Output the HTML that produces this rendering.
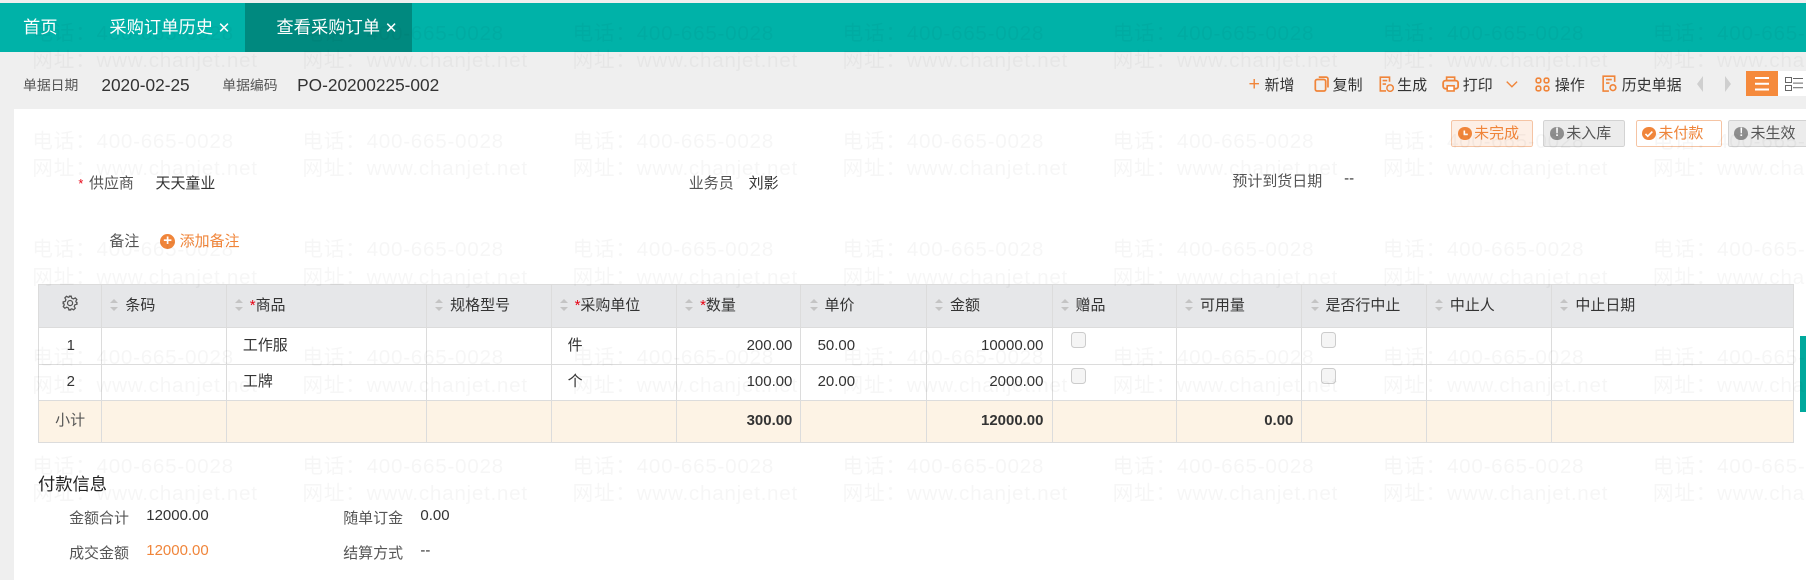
<!DOCTYPE html>
<html><head><meta charset="utf-8">
<style>
html,body{margin:0;padding:0;width:1806px;height:580px;overflow:hidden;background:#fff}
#p{zoom:1.15179;width:1568px;height:504px;position:relative;overflow:hidden;background:#efefef;font-family:"Liberation Sans","Noto Sans CJK SC",sans-serif;color:#333;font-size:13px}
.a{position:absolute;white-space:nowrap}
.tabs{position:absolute;left:0;top:3px;width:1568px;height:42px;background:#00b2a8}
.tab{position:absolute;top:0;height:42px;line-height:42px;color:#fff;font-size:15px}
.white{position:absolute;left:12px;top:95px;width:1556px;height:409px;background:#fff}
.tb{position:absolute;top:65px;height:16px;font-size:13px;color:#333;display:flex;align-items:center}
.st{position:absolute;top:104px;height:24px;line-height:22px;font-size:13px;border-radius:2px;box-sizing:border-box;padding-left:19px}
.st i{position:absolute;left:5px;top:5px;width:12px;height:12px;border-radius:50%;font-style:normal}
table{border-collapse:collapse;position:absolute;left:33px;top:247px;table-layout:fixed;font-size:13px}
td,th{border:1px solid #dcdcdc;padding:0 7px;white-space:nowrap;overflow:hidden;line-height:16px}
th{background:#e6e7e9;height:36px;font-weight:normal;text-align:left;color:#333}
td{height:31px}
tr.sub td{background:#fdf3e5;height:35px;font-weight:bold}
.ar{display:inline-block;width:7px;margin-right:6px;vertical-align:middle;position:relative;height:12px}
.ar:before{content:"";position:absolute;left:0;top:0;border:3.5px solid transparent;border-bottom:4px solid #c4c4c4;border-top:0}
.ar:after{content:"";position:absolute;left:0;top:7px;border:3.5px solid transparent;border-top:4px solid #c4c4c4;border-bottom:0}
.r{color:#e60012}
.cb{display:inline-block;width:11px;height:12px;border:1px solid #ccc;border-radius:3px;background:#f5f5f5;position:relative;top:-3px}
.wm{position:absolute;left:28px;top:17px;display:grid;grid-template-columns:repeat(7,234.5px);grid-auto-rows:94px;color:rgba(0,0,0,0.035);font-size:18px;line-height:24px;letter-spacing:.6px;pointer-events:none;font-family:"Liberation Sans","Noto Sans CJK SC",sans-serif}
</style></head><body><div id="p">
<div class="tabs">
 <div class="tab" style="left:20px">首页</div>
 <div class="tab" style="left:95px">采购订单历史 <span style="font-size:13px">✕</span></div>
 <div class="tab" style="left:213px;width:145px;background:#00897f;padding-left:27px;box-sizing:border-box">查看采购订单 <span style="font-size:13px">✕</span></div>
</div>
<div class="a" style="left:20px;top:65px;font-size:12px;color:#555;line-height:18px">单据日期</div>
<div class="a" style="left:88px;top:64px;font-size:15px;line-height:20px">2020-02-25</div>
<div class="a" style="left:193px;top:65px;font-size:12px;color:#555;line-height:18px">单据编码</div>
<div class="a" style="left:258px;top:64px;font-size:15px;line-height:20px">PO-20200225-002</div>

<div class="tb" style="left:1084px"><span style="color:#f0853a;font-size:17px;margin-right:4px">+</span>新增</div>
<div class="tb" style="left:1140px"><svg width="14" height="14" viewBox="0 0 14 14" style="margin-right:3px"><rect x="2" y="3" width="9" height="10" rx="1.5" fill="none" stroke="#f0853a" stroke-width="1.5"/><path d="M5 1h6.5a1.5 1.5 0 0 1 1.5 1.5V10" fill="none" stroke="#f0853a" stroke-width="1.5"/></svg>复制</div>
<div class="tb" style="left:1196px"><svg width="14" height="14" viewBox="0 0 14 14" style="margin-right:3px"><path d="M10 5V1H2v12h5M4 4h4M4 7h3" fill="none" stroke="#f0853a" stroke-width="1.4"/><circle cx="10.5" cy="10.5" r="2.8" fill="none" stroke="#f0853a" stroke-width="1.3"/></svg>生成</div>
<div class="tb" style="left:1252px"><svg width="15" height="14" viewBox="0 0 15 14" style="margin-right:3px"><rect x="1" y="4" width="13" height="7" rx="2" fill="none" stroke="#f0853a" stroke-width="1.6"/><rect x="4" y="1" width="7" height="3" fill="none" stroke="#f0853a" stroke-width="1.4"/><rect x="4.5" y="8.5" width="6" height="4.5" fill="#fff" stroke="#f0853a" stroke-width="1.4"/></svg>打印</div>
<div class="tb" style="left:1307px"><svg width="12" height="12" viewBox="0 0 12 12"><path d="M1.5 4l4.5 4.5 4.5-4.5" fill="none" stroke="#f0853a" stroke-width="1.2"/></svg></div>
<div class="tb" style="left:1333px"><svg width="13" height="13" viewBox="0 0 13 13" style="margin-right:4px" fill="none" stroke="#f0853a" stroke-width="1.4"><rect x="1" y="1" width="4" height="4" rx="1.5"/><rect x="8" y="1" width="4" height="4" rx="1.5"/><rect x="1" y="8" width="4" height="4" rx="1.5"/><rect x="8" y="8" width="4" height="4" rx="1.5"/></svg>操作</div>
<div class="tb" style="left:1391px"><svg width="13" height="15" viewBox="0 0 13 15" style="margin-right:4px" fill="none" stroke="#f0853a" stroke-width="1.4"><path d="M11 6V1H1v13h5M3.5 4h5M3.5 7h3"/><circle cx="9.5" cy="11" r="2.5"/></svg>历史单据</div>
<div class="a" style="left:1473px;top:66px;border:7px solid transparent;border-right:6px solid #cfcfcf;border-left:0"></div>
<div class="a" style="left:1498px;top:66px;border:7px solid transparent;border-left:6px solid #cfcfcf;border-right:0"></div>
<div class="a" style="left:1516px;top:62px;width:28px;height:21px;background:#f58a3c"><div style="position:absolute;left:8px;top:5px;width:12px;height:1.5px;background:#fff;box-shadow:0 5px 0 #fff,0 10px 0 #fff"></div></div>
<div class="a" style="left:1544px;top:62px;width:24px;height:21px;background:#fff"><div style="position:absolute;left:6px;top:5px;width:4px;height:3px;border:1px solid #666"></div><div style="position:absolute;left:6px;top:12px;width:4px;height:3px;border:1px solid #666"></div><div style="position:absolute;left:13px;top:6px;width:8px;height:1px;background:#666;box-shadow:0 4px 0 #666,0 8px 0 #666"></div></div>

<div class="white"></div>

<div class="st" style="left:1260px;width:71px;background:#fdefe6;border:1px solid #f5c4a4;color:#f0853a"><i style="background:#f0853a"><svg width="12" height="12" viewBox="0 0 12 12" style="position:absolute;left:0;top:0"><path d="M5.5 3v3.5H8.5" fill="none" stroke="#fff" stroke-width="1.4"/></svg></i>未完成</div>
<div class="st" style="left:1340px;width:71px;background:#ececec;border:1px solid #d3d3d3;color:#555"><i style="background:#8e8e8e;color:#fff;font-size:10px;line-height:12px;text-align:center;font-weight:bold">!</i>未入库</div>
<div class="st" style="left:1420px;width:75px;background:#fff;border:1px solid #f5c4a4;color:#f0853a"><i style="background:#f0853a"><svg width="12" height="12" viewBox="0 0 12 12" style="position:absolute;left:0;top:0"><path d="M3 6l2 2 4-4" fill="none" stroke="#fff" stroke-width="1.4"/></svg></i>未付款</div>
<div class="st" style="left:1500px;width:72px;background:#ececec;border:1px solid #d3d3d3;color:#555"><i style="background:#8e8e8e;color:#fff;font-size:10px;line-height:12px;text-align:center;font-weight:bold">!</i>未生效</div>

<div class="a" style="left:68px;top:149px;font-size:13px;color:#555"><span class="r" style="font-size:11px;margin-right:5px">*</span>供应商</div>
<div class="a" style="left:135px;top:149px;font-size:13px">天天童业</div>
<div class="a" style="left:598px;top:149px;color:#555">业务员</div>
<div class="a" style="left:650px;top:149px">刘影</div>
<div class="a" style="left:1070px;top:148px;color:#555">预计到货日期</div>
<div class="a" style="left:1167px;top:148px">--</div>
<div class="a" style="left:95px;top:200px;color:#555">备注</div>
<div class="a" style="left:139px;top:203px;width:13px;height:13px;border-radius:50%;background:#f0853a;color:#fff;font-size:13px;line-height:13px;text-align:center;font-weight:bold">+</div>
<div class="a" style="left:156px;top:200px;color:#f0853a">添加备注</div>

<table>
<colgroup><col style="width:55px"><col style="width:108px"><col style="width:174px"><col style="width:108px"><col style="width:109px"><col style="width:108px"><col style="width:109px"><col style="width:109px"><col style="width:108px"><col style="width:109px"><col style="width:108px"><col style="width:109px"><col style="width:210px"></colgroup>
<tr><th style="text-align:center"><svg width="14" height="14" viewBox="0 0 14 14"><circle cx="7" cy="7" r="2.2" fill="none" stroke="#555" stroke-width="1.1"/><path d="M6 1h2l.4 1.7 1.5.7 1.6-.9 1.4 1.4-.9 1.6.7 1.5L13 6v2l-1.7.4-.7 1.5.9 1.6-1.4 1.4-1.6-.9-1.5.7L8 13H6l-.4-1.7-1.5-.7-1.6.9-1.4-1.4.9-1.6-.7-1.5L1 8V6l1.7-.4.7-1.5-.9-1.6 1.4-1.4 1.6.9 1.5-.7z" fill="none" stroke="#555" stroke-width="1.1"/></svg></th>
<th><span class="ar"></span>条码</th><th><span class="ar"></span><span class="r">*</span>商品</th><th><span class="ar"></span>规格型号</th><th><span class="ar"></span><span class="r">*</span>采购单位</th><th><span class="ar"></span><span class="r">*</span>数量</th><th><span class="ar"></span>单价</th><th><span class="ar"></span>金额</th><th><span class="ar"></span>赠品</th><th><span class="ar"></span>可用量</th><th><span class="ar"></span>是否行中止</th><th><span class="ar"></span>中止人</th><th><span class="ar"></span>中止日期</th></tr>
<tr><td style="padding-left:24px">1</td><td></td><td style="padding-left:14px">工作服</td><td></td><td style="padding-left:14px">件</td><td style="text-align:right">200.00</td><td style="padding-left:14px">50.00</td><td style="text-align:right">10000.00</td><td style="padding-left:16px"><span class="cb"></span></td><td></td><td style="padding-left:16px"><span class="cb"></span></td><td></td><td></td></tr>
<tr><td style="padding-left:24px">2</td><td></td><td style="padding-left:14px">工牌</td><td></td><td style="padding-left:14px">个</td><td style="text-align:right">100.00</td><td style="padding-left:14px">20.00</td><td style="text-align:right">2000.00</td><td style="padding-left:16px"><span class="cb"></span></td><td></td><td style="padding-left:16px"><span class="cb"></span></td><td></td><td></td></tr>
<tr class="sub"><td style="font-weight:normal;color:#555;padding-left:14px">小计</td><td></td><td></td><td></td><td></td><td style="text-align:right">300.00</td><td></td><td style="text-align:right">12000.00</td><td></td><td style="text-align:right">0.00</td><td></td><td></td><td></td></tr>
</table>
<div class="a" style="left:1563px;top:292px;width:5px;height:66px;background:#00a99d"></div>

<div class="a" style="left:33px;top:408px;font-size:15px;color:#222">付款信息</div>
<div class="a" style="left:60px;top:440px;color:#555">金额合计</div>
<div class="a" style="left:127px;top:440px">12000.00</div>
<div class="a" style="left:298px;top:440px;color:#555">随单订金</div>
<div class="a" style="left:365px;top:440px">0.00</div>
<div class="a" style="left:60px;top:471px;color:#555">成交金额</div>
<div class="a" style="left:127px;top:471px;color:#f0853a">12000.00</div>
<div class="a" style="left:298px;top:471px;color:#555">结算方式</div>
<div class="a" style="left:365px;top:471px">--</div>

<div class="wm">
<div>电话：400-665-0028<br>网址：www.chanjet.net</div><div>电话：400-665-0028<br>网址：www.chanjet.net</div><div>电话：400-665-0028<br>网址：www.chanjet.net</div><div>电话：400-665-0028<br>网址：www.chanjet.net</div><div>电话：400-665-0028<br>网址：www.chanjet.net</div><div>电话：400-665-0028<br>网址：www.chanjet.net</div><div>电话：400-665-0028<br>网址：www.chanjet.net</div>
<div>电话：400-665-0028<br>网址：www.chanjet.net</div><div>电话：400-665-0028<br>网址：www.chanjet.net</div><div>电话：400-665-0028<br>网址：www.chanjet.net</div><div>电话：400-665-0028<br>网址：www.chanjet.net</div><div>电话：400-665-0028<br>网址：www.chanjet.net</div><div>电话：400-665-0028<br>网址：www.chanjet.net</div><div>电话：400-665-0028<br>网址：www.chanjet.net</div>
<div>电话：400-665-0028<br>网址：www.chanjet.net</div><div>电话：400-665-0028<br>网址：www.chanjet.net</div><div>电话：400-665-0028<br>网址：www.chanjet.net</div><div>电话：400-665-0028<br>网址：www.chanjet.net</div><div>电话：400-665-0028<br>网址：www.chanjet.net</div><div>电话：400-665-0028<br>网址：www.chanjet.net</div><div>电话：400-665-0028<br>网址：www.chanjet.net</div>
<div>电话：400-665-0028<br>网址：www.chanjet.net</div><div>电话：400-665-0028<br>网址：www.chanjet.net</div><div>电话：400-665-0028<br>网址：www.chanjet.net</div><div>电话：400-665-0028<br>网址：www.chanjet.net</div><div>电话：400-665-0028<br>网址：www.chanjet.net</div><div>电话：400-665-0028<br>网址：www.chanjet.net</div><div>电话：400-665-0028<br>网址：www.chanjet.net</div>
<div>电话：400-665-0028<br>网址：www.chanjet.net</div><div>电话：400-665-0028<br>网址：www.chanjet.net</div><div>电话：400-665-0028<br>网址：www.chanjet.net</div><div>电话：400-665-0028<br>网址：www.chanjet.net</div><div>电话：400-665-0028<br>网址：www.chanjet.net</div><div>电话：400-665-0028<br>网址：www.chanjet.net</div><div>电话：400-665-0028<br>网址：www.chanjet.net</div>
</div>
</div></body></html>
